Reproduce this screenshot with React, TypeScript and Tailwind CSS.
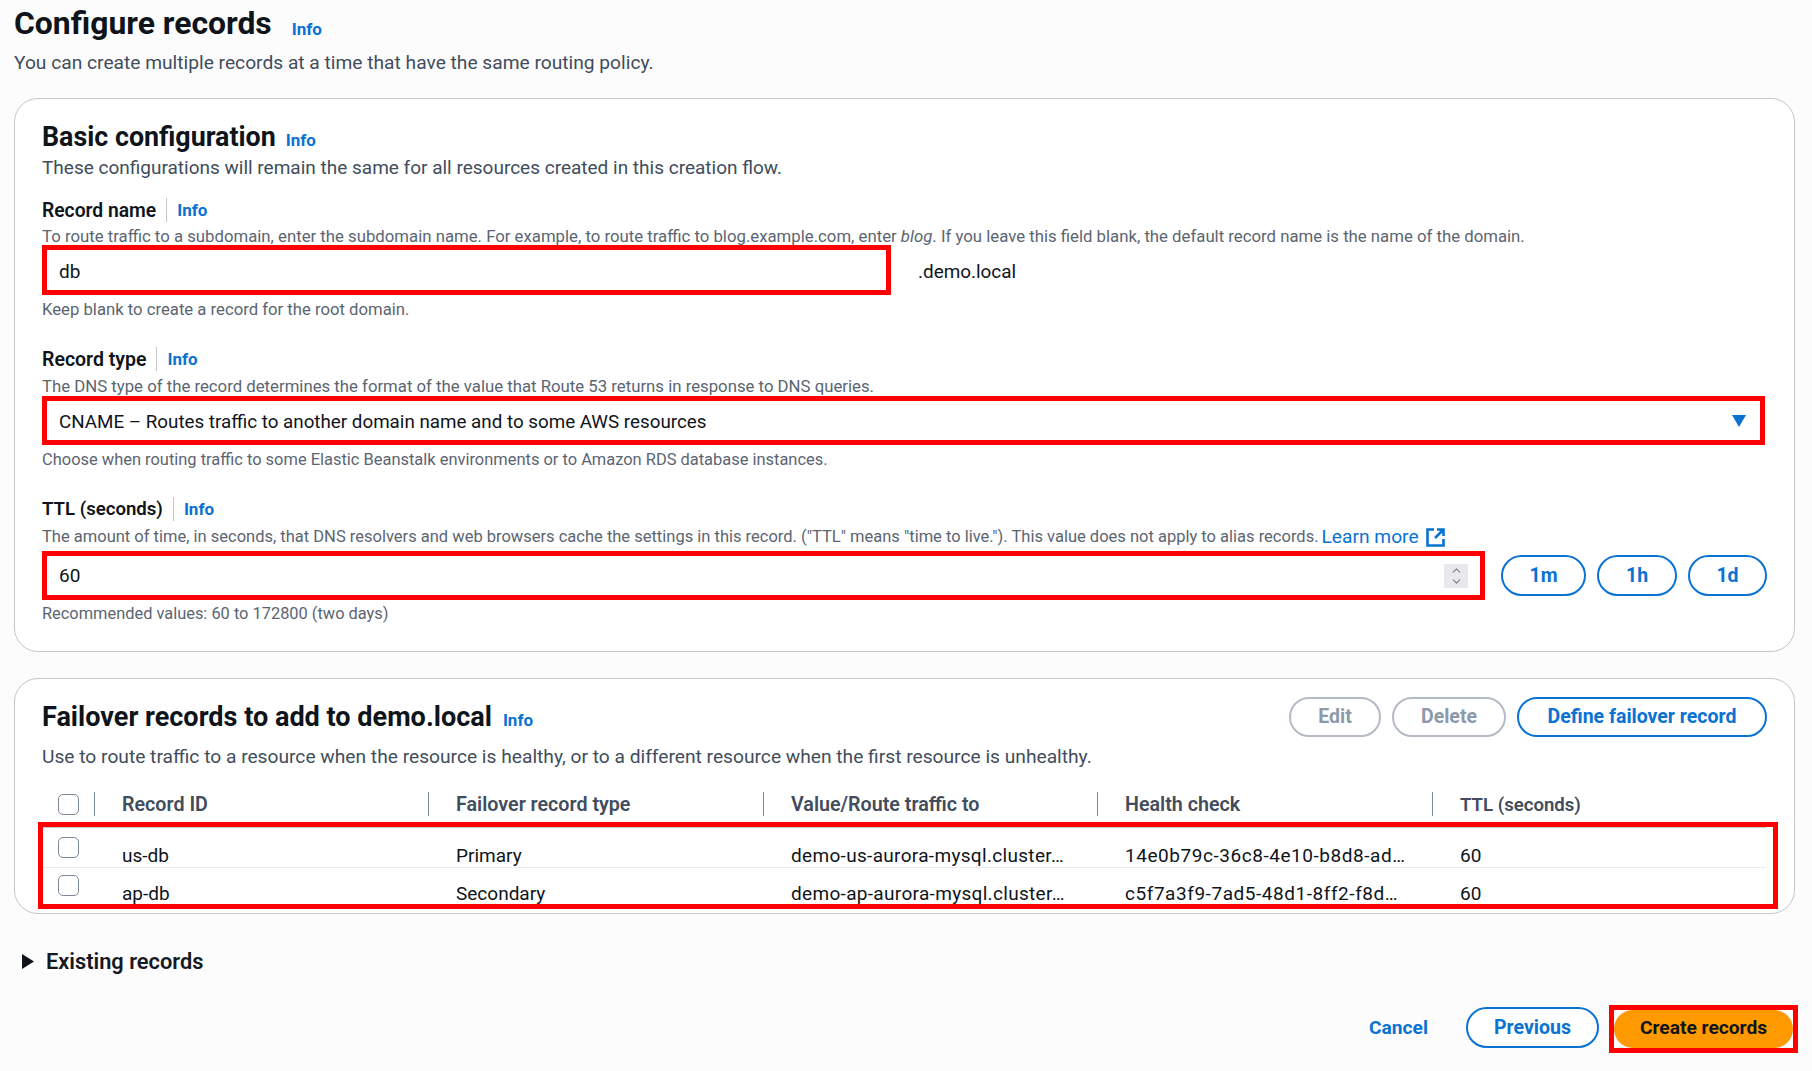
import { ChevronDown, ChevronUp } from 'lucide-react';

function Info({ className = '' }: { className?: string }) {
  return <a className={`font-bold text-[17px] text-[#0972d3] ${className}`}>Info</a>;
}

function FieldLabel({ text, mt, size = 'text-[19.3px]' }: { text: string; mt: string; size?: string }) {
  return (
    <div className={`flex items-center h-[28px] ${mt}`}>
      <span className={`pt-[2px] font-semibold ${size} text-[#0f141a]`}>{text}</span>
      <span className="ml-[10px] mr-[10px] w-px h-[24px] bg-[#c6c6cd]"></span>
      <Info className="pt-[2px]" />
    </div>
  );
}

function Hint({ children, mt, size = 'text-[16.7px]' }: { children: React.ReactNode; mt: string; size?: string }) {
  return <p className={`h-[20px] leading-[24px] ${size} text-[#5b6572] whitespace-nowrap ${mt}`}>{children}</p>;
}

function PillButton({ label, width, disabled }: { label: string; width: string; disabled?: boolean }) {
  return (
    <button
      className={`${width} h-full rounded-full border-2 bg-white pt-[1px] font-bold text-[19.5px] ${
        disabled ? 'border-[#b4bbc4] text-[#8d99a8]' : 'border-[#0972d3] text-[#0972d3]'
      }`}
    >
      {label}
    </button>
  );
}

function Checkbox() {
  return <span className="block w-[21px] h-[21px] rounded-[5px] border border-[#7d8998] bg-white"></span>;
}

const rows = [
  {
    id: 'us-db',
    type: 'Primary',
    value: 'demo-us-aurora-mysql.cluster…',
    health: '14e0b79c-36c8-4e10-b8d8-ad…',
  },
  {
    id: 'ap-db',
    type: 'Secondary',
    value: 'demo-ap-aurora-mysql.cluster…',
    health: 'c5f7a3f9-7ad5-48d1-8ff2-f8d…',
  },
];

const headers = ['Record ID', 'Failover record type', 'Value/Route traffic to', 'Health check', 'TTL (seconds)'];

export default function App() {
  return (
    <div className="min-h-[1071px] bg-[#fcfcfd] pl-[14px] pr-[17px] text-[#0f141a] [font-family:Roboto,sans-serif]">
      <div className="flex items-center h-[50px]">
        <h1 className="-mt-[2px] font-bold text-[31.9px]">Configure records</h1>
        <Info className="ml-[20px] mt-[9px]" />
      </div>
      <p className="h-[26px] leading-[26px] text-[19.2px] text-[#414d5c]">
        You can create multiple records at a time that have the same routing policy.
      </p>

      <section className="mt-[22px] h-[554px] rounded-[24px] border border-[#c6c6cd] bg-white pt-[20px] pl-[27px] pr-[27px]">
        <div className="flex items-center h-[36px]">
          <h2 className="font-bold text-[26.8px]">Basic configuration</h2>
          <Info className="ml-[10px] mt-[7px]" />
        </div>
        <p className="h-[26px] leading-[26px] text-[19px] text-[#414d5c]">
          These configurations will remain the same for all resources created in this creation flow.
        </p>

        <FieldLabel text="Record name" mt="mt-[15px]" />
        <Hint mt="" size="text-[16.75px]">
          To route traffic to a subdomain, enter the subdomain name. For example, to route traffic to blog.example.com,
          enter <i>blog</i>. If you leave this field blank, the default record name is the name of the domain.
        </Hint>
        <div className="flex items-center mt-px">
          <input
            readOnly
            value="db"
            className="w-[849px] h-[50px] border-[5px] border-[#ff0000] bg-white pl-[12px] pt-[2px] text-[19px] outline-none"
          />
          <span className="ml-[27px] pt-[4px] text-[18.9px]">.demo.local</span>
        </div>
        <Hint mt="mt-[3px]">Keep blank to create a record for the root domain.</Hint>

        <FieldLabel text="Record type" mt="mt-[27px]" size="text-[19.5px]" />
        <Hint mt="mt-px" size="text-[16.75px]">The DNS type of the record determines the format of the value that Route 53 returns in response to DNS queries.</Hint>
        <div className="flex items-center justify-between mt-[2px] h-[49px] border-[5px] border-[#ff0000] pl-[12px] pr-[14px] mr-[2px]">
          <span className="pt-[4px] text-[18.8px]">CNAME – Routes traffic to another domain name and to some AWS resources</span>
          <svg width="14" height="12" viewBox="0 0 14 12">
            <path d="M0 0h14L7 12z" fill="#0972d3" />
          </svg>
        </div>
        <Hint mt="mt-[3px]" size="text-[16.45px]">Choose when routing traffic to some Elastic Beanstalk environments or to Amazon RDS database instances.</Hint>

        <FieldLabel text="TTL (seconds)" mt="mt-[27px]" size="text-[18.6px]" />
        <div className="flex items-center h-[20px] mt-[3px] pt-[2px] whitespace-nowrap">
          <span className="text-[16.5px] text-[#5b6572]">
            The amount of time, in seconds, that DNS resolvers and web browsers cache the settings in this record. ("TTL"
            means "time to live."). This value does not apply to alias records.
          </span>
          <a className="ml-[3px] text-[19.2px] text-[#0972d3]">Learn more</a>
          <svg className="ml-[7px]" width="19" height="19" viewBox="0 0 19 19" fill="none" stroke="#0972d3" strokeWidth="2.6">
            <path d="M8 1.5H1.5v16h16V11" />
            <path d="M11 1.5h6.5V8M17.5 1.5 9 10" />
          </svg>
        </div>
        <div className="flex items-center mt-[5px]">
          <div className="flex items-center justify-between w-[1443px] h-[49px] border-[5px] border-[#ff0000] pl-[12px] pr-[12px]">
            <span className="pt-[2px] text-[19px]">60</span>
            <span className="flex flex-col items-center justify-center w-[24px] h-[24px] bg-[#e9e9ed] text-[#7d7d7d]">
              <ChevronUp size={13} strokeWidth={2} className="-mb-[1px]" />
              <ChevronDown size={13} strokeWidth={2} className="-mt-[1px]" />
            </span>
          </div>
          <div className="flex h-[41px] ml-[16px] gap-[11px]">
            <PillButton label="1m" width="w-[85px]" />
            <PillButton label="1h" width="w-[80px]" />
            <PillButton label="1d" width="w-[79px]" />
          </div>
        </div>
        <Hint mt="mt-[2px]" size="text-[16.4px]">Recommended values: 60 to 172800 (two days)</Hint>
      </section>

      <section className="mt-[26px] h-[236px] rounded-[24px] border border-[#c6c6cd] bg-white pl-[27px] pr-[27px]">
        <div className="flex items-center justify-between pt-[17px] h-[58px]">
          <div className="flex items-center">
            <h2 className="mt-[2px] font-bold text-[27.05px]">Failover records to add to demo.local</h2>
            <Info className="ml-[11px] mt-[8px]" />
          </div>
          <div className="flex h-[40px] gap-[11px]">
            <PillButton label="Edit" width="w-[92px]" disabled />
            <PillButton label="Delete" width="w-[114px]" disabled />
            <PillButton label="Define failover record" width="w-[250px]" />
          </div>
        </div>
        <p className="mt-[7px] h-[26px] leading-[26px] text-[19.2px] text-[#414d5c]">
          Use to route traffic to a resource when the resource is healthy, or to a different resource when the first
          resource is unhealthy.
        </p>

        <div className="grid grid-cols-[52px_334px_335px_334px_335px_1fr] items-center mt-[22px] h-[24px]">
          <div className="pl-[16px]">
            <Checkbox />
          </div>
          {headers.map((h) => (
            <div
              key={h}
              className={`h-[24px] border-l border-[#7d8998] pl-[27px] font-semibold leading-[26px] whitespace-nowrap text-[#414d5c] ${
                h === 'TTL (seconds)' ? 'text-[18.6px]' : 'text-[19.7px]'
              }`}
            >
              {h}
            </div>
          ))}
        </div>

        <div className="mt-[6px] -ml-[4px] -mr-[11px] h-[87px] border-[5px] border-[#ff0000]">
          {rows.map((r, i) => (
            <div
              key={r.id}
              className={`grid grid-cols-[51px_334px_335px_334px_335px_1fr] mr-[7px] text-[19px] leading-[24px] ${
                i === 0 ? 'h-[41px] border-y border-t-[#c6c6cd] border-b-[#e9ebed] pt-[9px]' : 'h-[36px] pt-[7px]'
              }`}
            >
              <div className="pl-[15px]">
                <Checkbox />
              </div>
              <div className="pl-[28px] pt-[7px]">{r.id}</div>
              <div className="pl-[28px] pt-[7px]">{r.type}</div>
              <div className="pl-[28px] pt-[7px] whitespace-nowrap tracking-[0.32px]">{r.value}</div>
              <div className="pl-[28px] pt-[7px] whitespace-nowrap tracking-[0.55px]">{r.health}</div>
              <div className="pl-[28px] pt-[7px]">60</div>
            </div>
          ))}
        </div>
      </section>

      <div className="flex items-center mt-[32px] h-[30px] pl-[8px]">
        <svg width="12" height="15" viewBox="0 0 12 15">
          <path d="M0 0l12 7.5L0 15z" fill="#0f141a" />
        </svg>
        <span className="ml-[12px] pt-[2px] font-semibold text-[21.8px] text-[#16191f]">Existing records</span>
      </div>

      <div className="flex items-center justify-end mt-[29px] -mr-[3px]">
        <a className="-mt-[2px] font-bold text-[19.2px] text-[#0972d3]">Cancel</a>
        <div className="h-[41px] flex -mt-[4px] ml-[38px]">
          <PillButton label="Previous" width="w-[133px]" />
        </div>
        <div className="ml-[10px] w-[189px] h-[48px] border-[5px] border-[#ff0000] bg-white">
          <button className="w-full h-full rounded-full bg-[#ff9900] pb-[2px] font-bold text-[19.2px] text-[#0f141a]">Create records</button>
        </div>
      </div>
    </div>
  );
}
